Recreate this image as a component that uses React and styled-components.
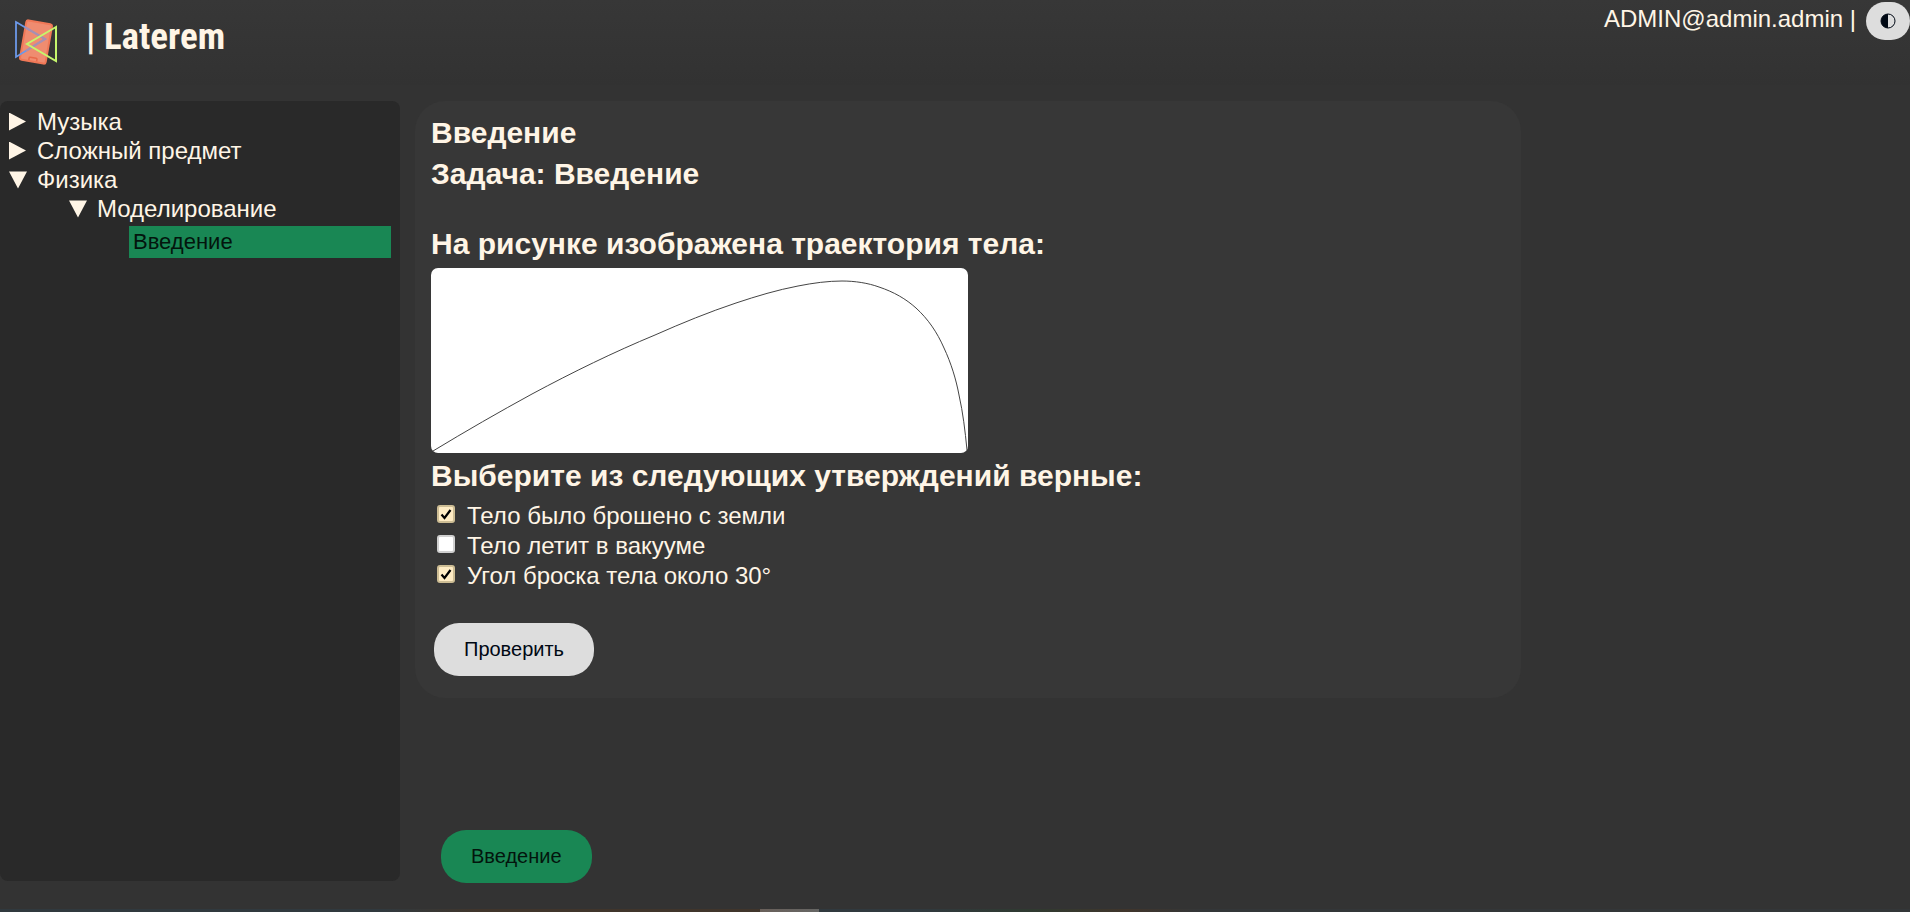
import React, { useState } from "react";
import styled, { createGlobalStyle, css } from "styled-components";

const GlobalStyle = createGlobalStyle`
  * { box-sizing: border-box; }
  body {
    margin: 0;
    background: #333333;
    color: #fff5e6;
    font-family: "Liberation Sans", Arial, sans-serif;
    font-size: 24px;
    line-height: 29px;
  }
`;

const Page = styled.div`
  min-height: 100vh;
  display: flex;
  flex-direction: column;
`;

const TopBar = styled.header`
  display: flex;
  justify-content: space-between;
  align-items: flex-start;
  height: 85px;
  background: linear-gradient(#373737, #323232);
`;

const Brand = styled.a`
  display: flex;
  align-items: center;
  gap: 26px;
  padding: 8px 12px;
  color: inherit;
  text-decoration: none;
`;

const BrandName = styled.span`
  font-family: "Liberation Sans Narrow", "Roboto Condensed", "Liberation Sans", sans-serif;
  font-size: 37px;
  font-weight: 700;
  line-height: 58px;
`;

const Account = styled.div`
  display: flex;
  align-items: flex-start;
  gap: 10px;
  padding-top: 2px;
  line-height: 34px;
`;

const ThemeButton = styled.button`
  display: flex;
  align-items: center;
  justify-content: center;
  width: 44px;
  height: 38px;
  padding: 0;
  border: 0;
  border-radius: 20px;
  background: #dddddd;
  color: #000814;
`;

const Body = styled.div`
  flex: 1;
  display: grid;
  grid-template-columns: 400px minmax(0, 1fr);
  gap: 15px;
  padding: 16px 0 28px;
`;

const Sidebar = styled.nav`
  padding: 6px 9px;
  border-radius: 8px;
  background: #292929;
`;

const Branch = styled.details`
  & & { margin-left: 60px; }
`;

const BranchTitle = styled.summary`
  display: flex;
  align-items: center;
  gap: 10px;
  cursor: pointer;
  list-style: none;
  &::before {
    content: "";
    width: 18px;
    height: 18px;
    background: currentColor;
    clip-path: polygon(0 0, 17px 50%, 0 100%);
  }
  details[open] > &::before {
    clip-path: polygon(0 1px, 100% 1px, 50% 100%);
  }
`;

const TaskLink = styled.a`
  display: block;
  margin: 3px 0 0 60px;
  padding: 0 4px;
  background: #198754;
  color: #03150d;
  font-size: 22px;
  line-height: 32px;
  text-decoration: none;
`;

const Main = styled.main`
  display: flex;
  flex-direction: column;
  justify-content: space-between;
  align-items: flex-start;
`;

const Card = styled.section`
  width: 74%;
  padding: 11px 16px 22px;
  border-radius: 30px;
  background: #373737;
`;

const Heading = styled.h2`
  margin: 0 0 ${(p) => (p.$spaced ? 29 : 0)}px;
  font-size: 30px;
  font-weight: 700;
  line-height: 41px;
`;

const Chart = styled.svg`
  display: block;
  width: 537px;
  height: 185px;
  margin: 4px 0 2px;
  border-radius: 7px;
  background: #ffffff;
`;

const Options = styled.div`
  display: flex;
  flex-direction: column;
  padding: 5px 0 32px 6px;
`;

const Option = styled.label`
  display: flex;
  align-items: center;
  gap: 12px;
  line-height: 30px;
`;

const Tick = styled.input`
  appearance: none;
  width: 18px;
  height: 18px;
  margin: 0 0 4px;
  border: 2px solid #d0d0d0;
  border-radius: 3px;
  background: #ffffff;
  &:checked {
    border-color: #cdbd94;
    background: #ffecc4 url("data:image/svg+xml,%3Csvg xmlns='http://www.w3.org/2000/svg' viewBox='0 0 14 14'%3E%3Cpath d='M2.5 7.5 5.5 11 11.5 3' fill='none' stroke='%23000' stroke-width='2.2'/%3E%3C/svg%3E");
  }
`;

const pill = css`
  height: 53px;
  padding: 0 30px;
  border: 0;
  border-radius: 25px;
  font-family: inherit;
  font-size: 20px;
  line-height: 53px;
  cursor: pointer;
`;

const CheckButton = styled.button`
  ${pill}
  margin-left: 3px;
  background: #dddddd;
  color: #000814;
`;

const StepLink = styled.a`
  ${pill}
  margin: 0 0 -2px 26px;
  background: #198754;
  color: #03150d;
  text-decoration: none;
`;

const BottomStrip = styled.footer`
  height: 3px;
  background: linear-gradient(90deg, #30393e 0, #30393e 20%, #40352b 25%, #40352b 39.8%, #69605a 39.8%, #666664 42.9%, #30393e 42.9%, #30393e 48%, #2f3a30 54%, #40352b 59%, #333638 63%);
`;

function Logo() {
  return (
    <svg width="48" height="56" viewBox="0 0 48 56" aria-hidden="true">
      <g transform="rotate(10 24 33)">
        <rect x="11" y="13" width="26" height="40" rx="2" fill="#ef8c70" stroke="#f07857" strokeWidth="2" />
        <path d="M20 52v-2q0-1 1-1h6q1 0 1 1v2" fill="none" stroke="#e8694a" strokeWidth="1.5" />
      </g>
      <path d="M4 13 33 30 4 48Z" fill="none" stroke="#6c98e8" strokeWidth="1.8" />
      <path d="M13 18 33 30 14 42" fill="none" stroke="#ab8fae" strokeWidth="2" />
      <path d="M44 18 15 35 44 52Z" fill="none" stroke="#c5f56c" strokeWidth="2" />
    </svg>
  );
}

const options = ["Тело было брошено с земли", "Тело летит в вакууме", "Угол броска тела около 30°"];

export default function App() {
  const [checked, setChecked] = useState([true, false, true]);
  const toggle = (i) => setChecked(checked.map((c, n) => (n === i ? !c : c)));
  return (
    <Page>
      <GlobalStyle />
      <TopBar>
        <Brand href="#">
          <Logo />
          <BrandName>| Laterem</BrandName>
        </Brand>
        <Account>
          <span>ADMIN@admin.admin |</span>
          <ThemeButton aria-label="Тема">
            <svg width="16" height="16" viewBox="0 0 16 16" fill="currentColor">
              <circle cx="8" cy="8" r="7" fill="none" stroke="currentColor" />
              <path d="M8 1a7 7 0 0 0 0 14Z" />
            </svg>
          </ThemeButton>
        </Account>
      </TopBar>
      <Body>
        <Sidebar>
          <Branch><BranchTitle>Музыка</BranchTitle></Branch>
          <Branch><BranchTitle>Сложный предмет</BranchTitle></Branch>
          <Branch open>
            <BranchTitle>Физика</BranchTitle>
            <Branch open>
              <BranchTitle>Моделирование</BranchTitle>
              <TaskLink href="#">Введение</TaskLink>
            </Branch>
          </Branch>
        </Sidebar>
        <Main>
          <Card>
            <Heading>Введение</Heading>
            <Heading $spaced>Задача: Введение</Heading>
            <Heading>На рисунке изображена траектория тела:</Heading>
            <Chart viewBox="0 0 537 185" role="img" aria-label="Траектория тела">
              <path
                d="M2 183C35 163 68 144 101 126C142 104 183 84 224 67C251 55 278 44 305 35C326 28 346 22 367 18C382 15 397 13 411 13C424 13 437 15 448 19C463 24 475 31 485 40C497 51 506 64 513 80C520 95 525 111 528 127C532 145 534 162 536 182"
                fill="none" stroke="#444" strokeWidth="1"
              />
            </Chart>
            <Heading>Выберите из следующих утверждений верные:</Heading>
            <Options>
              {options.map((text, i) => (
                <Option key={text}>
                  <Tick type="checkbox" checked={checked[i]} onChange={() => toggle(i)} />
                  {text}
                </Option>
              ))}
            </Options>
            <CheckButton>Проверить</CheckButton>
          </Card>
          <StepLink href="#">Введение</StepLink>
        </Main>
      </Body>
      <BottomStrip />
    </Page>
  );
}
